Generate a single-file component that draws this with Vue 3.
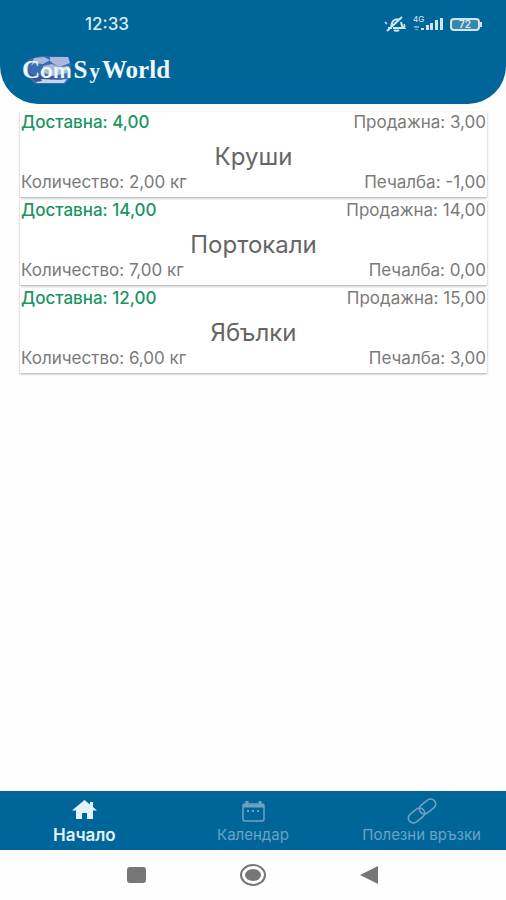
<template>
  <div class="screen">
    <header class="header">
      <div class="status">
        <span class="clock">12:33</span>
        <div class="status-icons">
          <svg class="icon-mute" viewBox="0 0 22 18" fill="none" stroke="#cfe6ee" stroke-width="2">
            <path d="M4 13h3l1-5c1-3 5-5 8-3M17 7l1 4 2 2H9M10 15c1 1 4 1 5 0M3 16L18 2" />
            <path d="M1 7l2 2M20 9l1 3" stroke-width="1.5" />
          </svg>
          <div class="network">
            <span class="network-type">4G</span>
            <svg class="icon-signal" viewBox="0 0 30 14" fill="#cfe6ee">
              <path d="M1 9h5v2H1zM2 12h3v1H2z" opacity=".5" />
              <path d="M8 11h3v2H8zM13 8h3v5h-3zM17 6h3v7h-3zM22 3h3v10h-3zM27 1h3v12h-3z" />
            </svg>
          </div>
          <div class="battery"><span>72</span></div>
        </div>
      </div>
      <div class="logo">
        <svg class="logo-globe" viewBox="0 0 50 32">
          <path d="M6 5L18 2l28 1 2 9-1 12-5 6H12L4 22 2 12z" fill="#3a6db0" />
          <path d="M11 4l10-1 6 3-7 4-8-1-4 3zM27 3h18l2 6-11 4-5-3-4-3zM20 12l9-2 7 3 10-1-2 7-14 3-9-3z" fill="#a9b9de" />
          <path d="M5 18l8 5 11-2 8 3-8 4-12-1z" fill="#3554a0" />
          <path d="M13 28l6-1-1-2 18 1 8-1-3 4H14z" fill="#c6d3ec" />
        </svg>
        <span class="logo-text">C<span class="logo-om">om</span><span class="logo-s">S</span><span class="logo-y">y</span>World</span>
      </div>
    </header>

    <main class="list">
      <article v-for="item in items" :key="item.name" class="card">
        <div class="row">
          <span class="delivery">Доставна: {{ item.delivery }}</span>
          <span>Продажна: {{ item.sale }}</span>
        </div>
        <h2 class="name">{{ item.name }}</h2>
        <div class="row">
          <span>Количество: {{ item.quantity }} кг</span>
          <span>Печалба: {{ item.profit }}</span>
        </div>
      </article>
    </main>

    <nav class="tabs">
      <button
        v-for="tab in tabs"
        :key="tab.id"
        type="button"
        class="tab"
        :class="{ active: tab.id === activeTab }"
        @click="activeTab = tab.id"
      >
        <svg v-if="tab.id === 'home'" class="tab-icon" viewBox="0 0 32 28" fill="currentColor">
          <path d="M16.500 3L4 13.500h4V22h6v-6h5v6h6v-8.500h4L25 10V5h-3v2.500z" />
        </svg>
        <svg v-else-if="tab.id === 'calendar'" class="tab-icon" viewBox="0 0 32 28" fill="none" stroke="currentColor">
          <rect x="6" y="7" width="21" height="17" rx="2" stroke-width="1.500" />
          <path d="M6 9h21M10 4v4M23 4v4" stroke-width="3" />
          <path d="M10 14h2M15 14h2M20 14h2" stroke-width="2" />
        </svg>
        <svg v-else class="tab-icon" viewBox="0 0 32 28" fill="none" stroke="currentColor" stroke-width="1.600">
          <rect x="-9" y="-5" width="18" height="10" rx="5" transform="translate(10.500 18.500) rotate(-38)" />
          <rect x="-9" y="-5" width="18" height="10" rx="5" transform="translate(21.500 9.500) rotate(-38)" />
        </svg>
        <span>{{ tab.label }}</span>
      </button>
    </nav>

    <div class="system-nav">
      <button type="button" aria-label="Recents">
        <svg viewBox="0 0 28 28"><rect x="5" y="6" width="19" height="16" rx="3" fill="#777" /></svg>
      </button>
      <button type="button" aria-label="Home">
        <svg viewBox="0 0 28 28">
          <ellipse cx="14" cy="14" rx="12" ry="10" fill="none" stroke="#777" stroke-width="2" />
          <ellipse cx="14" cy="14" rx="8" ry="6" fill="#777" />
        </svg>
      </button>
      <button type="button" aria-label="Back">
        <svg viewBox="0 0 28 28"><path d="M4 14L22 5v18z" fill="#777" /></svg>
      </button>
    </div>
  </div>
</template>

<script setup>
import { ref } from 'vue'

const items = [
  { name: 'Круши', delivery: '4,00', sale: '3,00', quantity: '2,00', profit: '-1,00' },
  { name: 'Портокали', delivery: '14,00', sale: '14,00', quantity: '7,00', profit: '0,00' },
  { name: 'Ябълки', delivery: '12,00', sale: '15,00', quantity: '6,00', profit: '3,00' },
]

const tabs = [
  { id: 'home', label: 'Начало' },
  { id: 'calendar', label: 'Календар' },
  { id: 'links', label: 'Полезни връзки' },
]

const activeTab = ref('home')
</script>

<style>
body {
  margin: 0;
  background: #fefefe;
}
</style>

<style scoped>
* { box-sizing: border-box; }

.screen {
  display: flex;
  flex-direction: column;
  min-height: 100vh;
  font-family: Inter, Roboto, sans-serif;
  font-size: 17px;
  color: #7a7a7a;
}

.header {
  height: 104px;
  background: #006699;
  border-radius: 0 0 38px 38px;
}

.status {
  display: flex;
  align-items: center;
  justify-content: space-between;
  height: 48px;
  padding: 0 26px 0 85px;
  color: #d8edf4;
}
.clock { font-size: 17px; font-weight: 500; }
.status-icons { display: flex; align-items: center; gap: 7px; }
.icon-mute { width: 22px; height: 18px; }
.network { position: relative; width: 30px; height: 14px; }
.network-type { position: absolute; top: -2px; left: 0; font-size: 8px; line-height: 8px; }
.icon-signal { display: block; width: 30px; height: 14px; }

.battery {
  position: relative;
  display: flex;
  align-items: center;
  justify-content: center;
  width: 30px;
  height: 13px;
  border: 2px solid #cfe6ee;
  border-radius: 4px;
  background: #3b86ae;
  font-size: 10px;
  font-weight: 600;
  line-height: 10px;
}
.battery::after {
  content: '';
  position: absolute;
  right: -4px;
  top: 2px;
  width: 2px;
  height: 5px;
  background: #cfe6ee;
}

.logo {
  display: flex;
  align-items: center;
  position: relative;
  height: 44px;
  padding-left: 22px;
}
.logo-globe { position: absolute; left: 23px; top: 6px; width: 50px; height: 32px; }
.logo-text {
  position: relative;
  font-family: 'Liberation Serif', serif;
  font-size: 25px;
  font-weight: bold;
  line-height: 32px;
  color: #eef8fb;
}
.logo-om { font-family: 'Liberation Sans', sans-serif; font-size: 21px; }
.logo-s { margin: 0 2px; }
.logo-y { margin-right: 2px; font-size: 21px; }

.list {
  flex: 1;
  display: flex;
  flex-direction: column;
  gap: 3px;
  padding: 8px 19px 8px 20px;
}

.card {
  display: flex;
  flex-direction: column;
  height: 85px;
  background: #fff;
  box-shadow: 0 1px 2px rgba(0, 0, 0, .35);
}
.row {
  display: flex;
  justify-content: space-between;
  padding: 0 1px;
  line-height: 20px;
}
.delivery { color: #1a9562; font-weight: 500; }
.name {
  margin: 0;
  padding-top: 10px;
  font-size: 24px;
  font-weight: 400;
  line-height: 30px;
  text-align: center;
  color: #666;
}

.tabs {
  display: grid;
  grid-template-columns: repeat(3, 1fr);
  height: 59px;
  background: #006699;
}
.tab {
  display: flex;
  flex-direction: column;
  align-items: center;
  padding: 6px 0 0;
  border: 0;
  background: none;
  color: #6ba3c2;
  font-family: inherit;
  font-size: 15px;
  line-height: 20px;
  cursor: pointer;
}
.tab.active { color: #e2f2f7; font-size: 17px; font-weight: 600; }
.tab-icon { width: 32px; height: 28px; }

.system-nav {
  display: flex;
  align-items: center;
  justify-content: center;
  gap: 89px;
  height: 50px;
}
.system-nav button {
  display: flex;
  padding: 0;
  border: 0;
  background: none;
}
.system-nav svg { width: 28px; height: 28px; }
</style>
